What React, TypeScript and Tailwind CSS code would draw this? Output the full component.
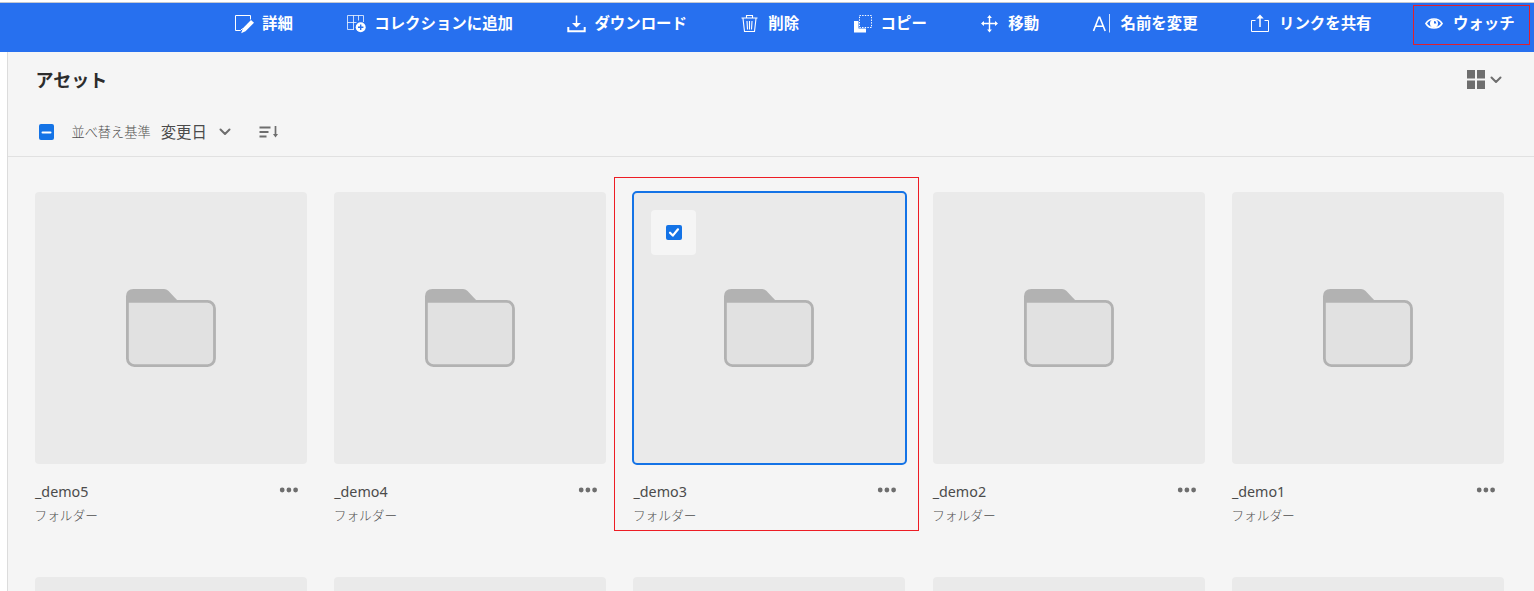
import React from "react";

const line = { fill: "none", stroke: "currentColor" } as const;

const icons: Record<string, React.ReactNode> = {
  properties: (
    <>
      <path d="M16.500 5.500v-4h-15v15h5l2-2" {...line} />
      <path d="M17 6l3 2.800-8.500 8.500-4.300 1.900 1.500-4.700z" fill="currentColor" />
    </>
  ),
  collection: (
    <>
      <path d="M8 15.500H1.500v-14h16v6.500M1.500 8.500h9M7.500 1.500v14M12.500 1.500v5" {...line} opacity=".75" />
      <circle cx="14.700" cy="13.200" r="5" fill="currentColor" />
      <path d="M14.700 10.500v5.400M12 13.200h5.400" stroke="#2770ef" strokeWidth="1.400" />
    </>
  ),
  download: (
    <>
      <path d="M10.500 1.500v9" {...line} strokeWidth="1.500" />
      <path d="M6 9h9l-4.500 4.500z" fill="currentColor" />
      <path d="M2.300 13v4.300h16.400V13" {...line} strokeWidth="2" />
    </>
  ),
  trash: (
    <path d="M1.500 4h16M6.500 3.500v-2h6v2M3 4.500l1.500 13h10l1.500-13M7 7l.5 8.500M9.500 7v8.500M12 7l-.5 8.500" {...line} strokeWidth="1.100" />
  ),
  copy: (
    <>
      <path d="M1 7h4.500v7.500H13V18.500H1z" fill="currentColor" />
      <rect x="6.500" y="1.500" width="12" height="12" {...line} strokeDasharray="1.400 1.270" />
    </>
  ),
  move: (
    <>
      <path d="M9.500 3v14M2.500 9.500h14" {...line} strokeWidth="1.400" />
      <path d="M9.500 1l2.400 3H7.100zM9.500 18.500l2.400-3H7.100zM1 9.500l3-2.400v4.800zM18 9.500l-3-2.400v4.800z" fill="currentColor" />
    </>
  ),
  rename: (
    <>
      <path d="M1.500 17L6.900 3.200h.8L13.200 17M3.600 12.300h7.600" {...line} strokeWidth="1.600" />
      <path d="M17.500 0v18.500" {...line} opacity=".8" />
    </>
  ),
  share: (
    <>
      <path d="M4.500 6.500h-4v11h17v-11h-4" {...line} />
      <path d="M9 13V4" {...line} strokeWidth="1.500" />
      <path d="M5.300 4.500L9 .5l3.700 4z" fill="currentColor" />
    </>
  ),
  watch: (
    <>
      <path d="M1 9.500C4.500 3.500 13.500 3.500 17 9.500 13.500 15.500 4.500 15.500 1 9.500z" {...line} strokeWidth="1.700" />
      <circle cx="9" cy="9.500" r="3.200" fill="none" stroke="currentColor" strokeWidth="1.600" />
      <path d="M9 9.500V6a3.500 3.500 0 0 0-3 5.300A3.500 3.500 0 0 0 12.300 9.500z" fill="currentColor" />
    </>
  ),
};

const actions = [
  ["properties", "詳細"],
  ["collection", "コレクションに追加"],
  ["download", "ダウンロード"],
  ["trash", "削除"],
  ["copy", "コピー"],
  ["move", "移動"],
  ["rename", "名前を変更"],
  ["share", "リンクを共有"],
  ["watch", "ウォッチ"],
];

const folders = ["_demo5", "_demo4", "_demo3", "_demo2", "_demo1"];

function Chevron() {
  return (
    <svg width="12" height="8" viewBox="0 0 12 8" className="shrink-0">
      <path d="M1.500 1.500L6 6l4.500-4.500" fill="none" stroke="#6e6e6e" strokeWidth="2" strokeLinecap="round" strokeLinejoin="round" />
    </svg>
  );
}

function Toolbar() {
  return (
    <header className="flex h-[50px] shrink-0 items-start gap-[53.400px] border-t border-[#c4c8d0] bg-[#2770ef] pl-[234px] text-white">
      {actions.map(([icon, label]) => (
        <button key={icon} className="relative flex h-[42px] shrink-0 items-center gap-[8px]">
          <svg width="20" height="20" viewBox="0 0 20 20" className="shrink-0">{icons[icon]}</svg>
          <span className="text-[15.430px] leading-[22px] font-bold whitespace-nowrap">{label}</span>
          {icon === "watch" && (
            <span className="pointer-events-none absolute top-[2px] -left-[12px] h-[40px] w-[117px] border border-[#e0202e]" />
          )}
        </button>
      ))}
    </header>
  );
}

function FolderIcon() {
  return (
    <svg width="92" height="80" viewBox="0 0 92 80">
      <path d="M1 13V8.500Q1 1 8.500 1h30.500q2.500 0 4.300 1.700L53 13z" fill="#b2b2b2" />
      <path d="M2.400 13.400H82.500a7 7 0 0 1 7 7V70.600a7 7 0 0 1-7 7H9.400a7 7 0 0 1-7-7z" fill="#e1e1e1" stroke="#b2b2b2" strokeWidth="2.800" />
    </svg>
  );
}

function FolderCard({ name }: { name: string }) {
  const selected = name === "_demo3";
  return (
    <article className="relative">
      <div className="relative flex h-[272px] items-center justify-center rounded bg-[#eaeaea]">
        <FolderIcon />
        {selected && (
          <>
            <span className="absolute -inset-x-[1.500px] -inset-y-px rounded-[5px] border-2 border-[#1473e6]" />
            <span className="absolute top-[18px] left-[18px] flex h-[45px] w-[45px] items-center justify-center rounded bg-[#f5f5f5]">
              <svg width="16" height="16" viewBox="0 0 16 16">
                <rect width="16" height="15" rx="2" fill="#1473e6" />
                <path d="M4 7.700l2.800 2.900L12 4.300" fill="none" stroke="#fff" strokeWidth="2.200" strokeLinecap="round" strokeLinejoin="round" />
              </svg>
            </span>
          </>
        )}
      </div>
      <div className="flex justify-between pt-[16px] pr-[8px]">
        <h2 className="pt-px text-[14.300px] leading-[22px] text-[#4b4b4b]">{name}</h2>
        <svg width="20" height="20" viewBox="0 0 20 20" fill="#6e6e6e">
          <circle cx="3.200" cy="10" r="2.400" />
          <circle cx="9.900" cy="10" r="2.400" />
          <circle cx="16.600" cy="10" r="2.400" />
        </svg>
      </div>
      <p className="-ml-[.5px] pt-[2px] text-[12.700px] leading-[20px] font-light text-[#505050]">フォルダー</p>
      {selected && (
        <span className="pointer-events-none absolute -top-[15px] -left-[19.500px] h-[354px] w-[305px] border border-[#ed1c24]" />
      )}
    </article>
  );
}

export default function App() {
  return (
    <div className="flex h-[591px] w-[1534px] flex-col overflow-hidden bg-white pt-[2px] font-['Noto_Sans','Noto_Sans_CJK_JP',sans-serif]">
      <Toolbar />
      <main className="ml-[7px] flex-1 overflow-hidden border-l border-[#dcdcdc] bg-[#f5f5f5]">
        <section className="h-[105px] border-b border-[#e1e1e1] pl-[27.500px]">
          <div className="flex h-[56px] items-center justify-between pr-[32px]">
            <h1 className="text-[18px] leading-[26px] font-bold text-[#2c2c2c]">アセット</h1>
            <div className="flex items-center gap-[5px] pb-px">
              <svg width="18" height="19" viewBox="0 0 18 19" fill="#6e6e6e">
                <path d="M0 0h8v8.500H0zM10 0h8v8.500h-8zM0 10.500h8V19H0zM10 10.500h8V19h-8z" />
              </svg>
              <Chevron />
            </div>
          </div>
          <div className="flex h-[48px] items-center pl-[3.500px]">
            <svg width="15" height="16" viewBox="0 0 15 16" className="shrink-0">
              <rect width="15" height="16" rx="2" fill="#1473e6" />
              <path d="M3.500 8.500h8" stroke="#fff" strokeWidth="2" strokeLinecap="round" />
            </svg>
            <span className="ml-[17.500px] text-[13.200px] leading-[20px] font-light text-[#505050]">並べ替え基準</span>
            <span className="ml-[10px] pt-px text-[15.400px] leading-[20px] text-[#4b4b4b]">変更日</span>
            <span className="ml-[12.500px] flex"><Chevron /></span>
            <svg className="ml-[28px]" width="20" height="14" viewBox="0 0 20 14" fill="none" stroke="#6e6e6e">
              <path d="M.5 2.500h11M.5 7h9M.5 11.500h7" strokeWidth="2" />
              <path d="M16.500 1v9" strokeWidth="1.700" />
              <path d="M14 9h5l-2.500 3.500z" fill="#6e6e6e" stroke="none" />
            </svg>
          </div>
        </section>
        <section className="grid grid-cols-[repeat(5,272px)] gap-x-[27.220px] gap-y-[52px] pt-[35px] pl-[27px]">
          {folders.map((name) => <FolderCard key={name} name={name} />)}
          {folders.map((name) => <div key={`next-${name}`} className="h-[272px] rounded bg-[#eaeaea]" />)}
        </section>
      </main>
    </div>
  );
}
